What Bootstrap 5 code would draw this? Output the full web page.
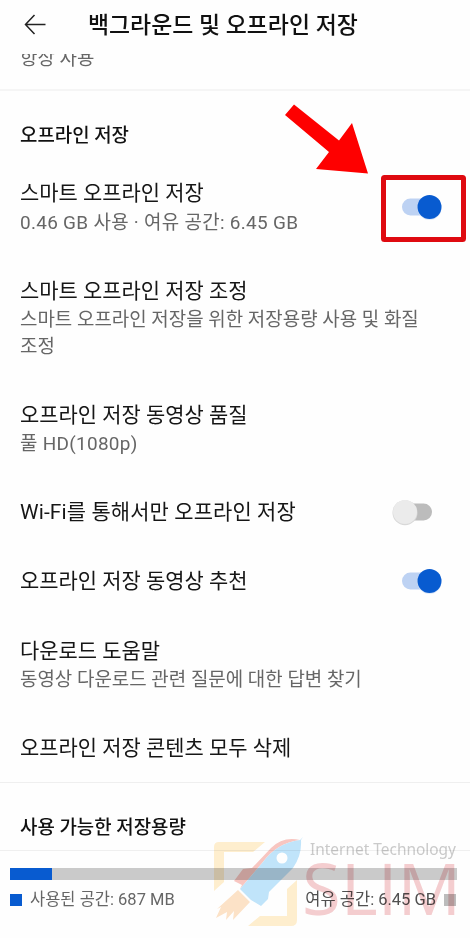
<!DOCTYPE html>
<html lang="ko">
<head>
<meta charset="utf-8">
<meta name="viewport" content="width=device-width, initial-scale=1">
<title>백그라운드 및 오프라인 저장</title>
<link href="https://cdn.jsdelivr.net/npm/bootstrap@5.3.0/dist/css/bootstrap.min.css" rel="stylesheet">
<style>
  body { font-family: Roboto, "Noto Sans CJK KR", sans-serif; color: #161616; background: #fefefe; }
  .screen { width: 470px; height: 938px; }
  .topbar { height: 50px; padding-left: 24px; gap: 41px; }
  .topbar h1 { font-size: 22.9px; line-height: 30px; font-weight: 500; color: #111; padding-top: 2px; }
  .clipped { height: 39px; padding: 4px 0 0 20px; }
  .clipped-window { height: 16px; }
  .sub { font-size: 18.95px; line-height: 26.5px; color: #666; }
  .sub-latin { letter-spacing: .3px; }
  .clipped .sub { margin-top: -8px; }
  .rule { height: 2px; background: #f5f5f5; }
  .rule-thin { height: 1px; background: #efefef; }
  .section-title { font-size: 18.9px; line-height: 26px; font-weight: 500; padding-left: 20px; color: #111; }
  .section-offline { padding-top: 32px; padding-bottom: 10.3px; }
  .section-storage { padding-top: 32px; padding-bottom: 9px; }
  .setting { padding: 20.2px 28px 20.2px 20px; }
  .setting-last { padding-bottom: 19.2px; }
  .setting-title { font-size: 20.95px; line-height: 29px; }
  .title-latin { letter-spacing: .12px; }
  .setting .sub { margin-top: 1.5px; }
  .switch { width: 40px; height: 26px; }
  .switch-off { margin-right: 10px; }
  .meter { height: 12px; margin: 17px 13px 0 10px; background: #cacaca; border-radius: 0; }
  .meter .progress-bar { background: #085bd0; }
  .legend { font-size: 16.5px; line-height: 24px; color: #666; padding: 0 14px 0 10px; margin-top: 7.5px; }
  .swatch { width: 12px; height: 12px; }
  .swatch-used { background: #085bd0; }
  .swatch-free { background: #bcbcbc; }
  .legend-free { color: #505050; }
  .overlay { left: 0; top: 0; pointer-events: none; }
  .brand-mark { mix-blend-mode: multiply; }
</style>
<script src="https://cdn.jsdelivr.net/npm/bootstrap@5.3.0/dist/js/bootstrap.bundle.min.js"></script>
</head>
<body>
<main class="screen position-relative overflow-hidden">
  <header class="topbar d-flex align-items-center">
    <svg width="23" height="22" viewBox="0 0 23 22" fill="none" stroke="#222" stroke-width="1.5"><path d="M10.500 1 1.500 10.500 10.500 20M1.500 10.500H21.500"/></svg>
    <h1 class="mb-0 text-nowrap">백그라운드 및 오프라인 저장</h1>
  </header>
  <div class="clipped"><div class="clipped-window overflow-hidden"><div class="sub">항상 사용</div></div></div>
  <div class="rule"></div>

  <section>
    <h2 class="section-title section-offline mb-0">오프라인 저장</h2>
    <div class="setting d-flex align-items-center justify-content-between">
      <div><div class="setting-title">스마트 오프라인 저장</div><div class="sub sub-latin">0.46 GB 사용 · 여유 공간: 6.45 GB</div></div>
      <svg class="switch" viewBox="0 0 40 26"><rect y="3.500" width="34" height="17" rx="8.500" fill="#bdd2f3"/><circle cx="27.500" cy="13" r="12" fill="#dfe9f8"/><circle cx="27.500" cy="12" r="12" fill="#085bd0"/></svg>
    </div>
    <div class="setting">
      <div class="setting-title">스마트 오프라인 저장 조정</div>
      <div class="sub">스마트 오프라인 저장을 위한 저장용량 사용 및 화질<br>조정</div>
    </div>
    <div class="setting">
      <div class="setting-title">오프라인 저장 동영상 품질</div>
      <div class="sub sub-latin">풀 HD(1080p)</div>
    </div>
    <div class="setting d-flex align-items-center justify-content-between">
      <div class="setting-title title-latin">Wi-Fi를 통해서만 오프라인 저장</div>
      <svg class="switch switch-off" viewBox="0 0 40 26"><rect x="6" y="3.500" width="34" height="17" rx="8.500" fill="#bcbcbc"/><circle cx="13" cy="12.700" r="12.500" fill="#d8d8d8"/><circle cx="13" cy="12" r="12" fill="#ebebeb"/></svg>
    </div>
    <div class="setting d-flex align-items-center justify-content-between">
      <div class="setting-title">오프라인 저장 동영상 추천</div>
      <svg class="switch" viewBox="0 0 40 26"><rect y="3.500" width="34" height="17" rx="8.500" fill="#bdd2f3"/><circle cx="27.500" cy="13" r="12" fill="#dfe9f8"/><circle cx="27.500" cy="12" r="12" fill="#085bd0"/></svg>
    </div>
    <div class="setting">
      <div class="setting-title">다운로드 도움말</div>
      <div class="sub">동영상 다운로드 관련 질문에 대한 답변 찾기</div>
    </div>
    <div class="setting setting-last"><div class="setting-title">오프라인 저장 콘텐츠 모두 삭제</div></div>
  </section>
  <div class="rule-thin"></div>

  <section>
    <h2 class="section-title section-storage mb-0">사용 가능한 저장용량</h2>
    <div class="rule-thin"></div>
    <div class="progress meter"><div class="progress-bar" style="width: 9.5%"></div></div>
    <div class="legend d-flex justify-content-between align-items-center">
      <div class="d-flex align-items-center gap-2"><span class="swatch swatch-used"></span><span>사용된 공간: 687 MB</span></div>
      <div class="legend-free d-flex align-items-center gap-2"><span>여유 공간: 6.45 GB</span><span class="swatch swatch-free"></span></div>
    </div>
  </section>

  <svg class="overlay brand-mark position-absolute" width="470" height="938" viewBox="0 0 470 938">
    <g fill="#ffefcf">
      <path d="M219 842H265L253 852H224V882L214 891V847Q214 842 219 842Z"/>
      <path d="M297 880V920Q297 926 291 926H248L260 916H287V889Z"/>
    </g>
    <path d="M238 890 250 902 233 920 234 911 226 920 227 912 216 918 221 907 217 909Z" fill="#fde3c8"/>
    <path d="M300 840Q283 836 271 848L252 868 243 869 234 881 242 885 240 889 263 862Q277 843 300 840Z" fill="#f9c7c2"/>
    <path d="M303 837 300 840Q277 843 263 862L240 889 251 900 261 906 268 899 269 892 293 868Q302 855 301 840Z" fill="#c1e5fb"/>
    <circle cx="282" cy="858" r="5.500" fill="#fff"/>
    <g>
      <text x="310" y="855" font-family="Noto Sans, sans-serif" font-size="17" fill="#cbcbcb" textLength="146" lengthAdjust="spacingAndGlyphs">Internet Technology</text>
      <text x="302" y="915" font-family="Open Sans, sans-serif" font-size="71" fill="#f5ced0" textLength="159" lengthAdjust="spacingAndGlyphs">SLIM</text>
    </g>
  </svg>
  <svg class="overlay position-absolute" width="470" height="260" viewBox="0 0 470 260">
    <path d="M294 104.500 339 140.500 352 123 368 173.500 316 169 329 152 285 115Z" fill="#fe0000"/>
    <rect x="383.500" y="177.500" width="80" height="62" rx="1" fill="none" stroke="#df0a10" stroke-width="5"/>
  </svg>
</main>
</body>
</html>
